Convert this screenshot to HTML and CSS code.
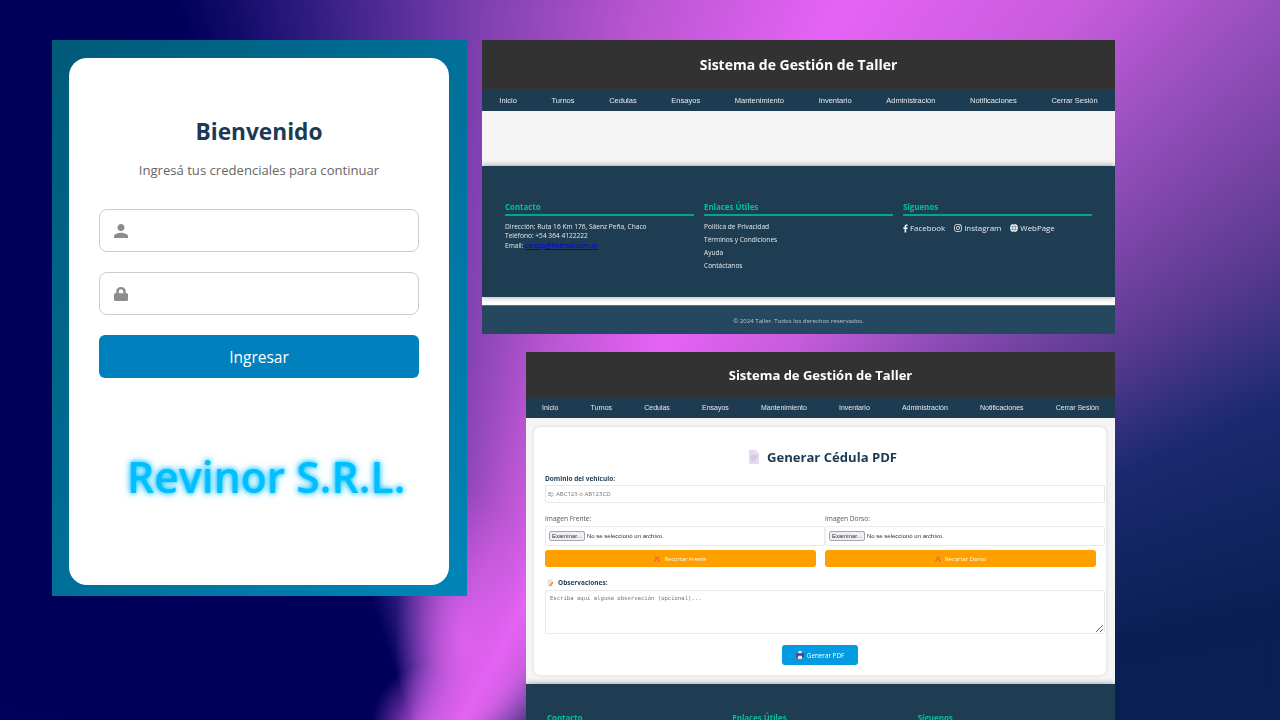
FILE: index.html
```html
<!DOCTYPE html>
<html lang="es">
<head>
  <meta charset="utf-8">
  <title>Revinor S.R.L.</title>
  <link rel="stylesheet" href="styles.css">
</head>
<body>
  <div class="window loginShot">
    <div class="loginCard">
      <h1 class="loginTitle">Bienvenido</h1>
      <p class="loginSub">Ingresá tus credenciales para continuar</p>
      <div class="loginField">
        <svg class="fieldIcon" viewBox="4 4 16 16"><path d="M12 12c2.21 0 4-1.79 4-4s-1.79-4-4-4-4 1.79-4 4 1.79 4 4 4zm0 2c-2.67 0-8 1.34-8 4v2h16v-2c0-2.66-5.33-4-8-4z"/></svg>
      </div>
      <div class="loginField second">
        <svg class="fieldIcon" viewBox="0 0 448 512" preserveAspectRatio="none"><path d="M400 224h-24v-72C376 68.2 307.8 0 224 0S72 68.2 72 152v72H48c-26.5 0-48 21.500-48 48v192c0 26.500 21.500 48 48 48h352c26.500 0 48-21.500 48-48V272c0-26.500-21.500-48-48-48zm-104 0H152v-72c0-39.700 32.300-72 72-72s72 32.300 72 72v72z"/></svg>
      </div>
      <button class="loginButton">Ingresar</button>
      <div class="brand">Revinor S.R.L.</div>
    </div>
  </div>

  <div class="window homeShot">
    <div class="topBar">Sistema de Gestión de Taller</div>
    <nav class="navBar">
      <span>Inicio</span><span>Turnos</span><span>Cedulas</span><span>Ensayos</span><span>Mantenimiento</span><span>Inventario</span><span>Administración</span><span>Notificaciones</span><span>Cerrar Sesión</span>
    </nav>
    <div class="emptyMain"></div>
    <footer class="siteFooter">
      <div class="footerCol">
        <h4>Contacto</h4>
        <p class="contactText">Dirección: Ruta 16 Km 176, Sáenz Peña, Chaco<br>Teléfono: +54 364 4122222<br>Email: <a href="#">centsp@hotmail.com.ar</a></p>
      </div>
      <div class="footerCol">
        <h4>Enlaces Útiles</h4>
        <p class="footerLink first">Política de Privacidad</p>
        <p class="footerLink">Términos y Condiciones</p>
        <p class="footerLink">Ayuda</p>
        <p class="footerLink">Contáctanos</p>
      </div>
      <div class="footerCol">
        <h4>Síguenos</h4>
        <div class="socialRow">
          <span class="socialItem"><svg class="socialIcon fb" viewBox="0 0 320 512"><path d="M279 288l14-93h-89v-60c0-25 12-50 52-50h41V6s-37-6-72-6c-73 0-121 44-121 125v70H23v93h81v224h100V288z"/></svg>Facebook</span>
          <span class="socialItem"><svg class="socialIcon" viewBox="0 0 16 16" fill="none" stroke="#fff" stroke-width="1.500"><rect x="1" y="1" width="14" height="14" rx="4"/><circle cx="8" cy="8" r="3.200"/><circle cx="12" cy="4" r=".5"/></svg>Instagram</span>
          <span class="socialItem"><svg class="socialIcon" viewBox="0 0 16 16"><circle cx="8" cy="8" r="8" fill="#fff"/><path d="M0 5.500h16M0 10.500h16M8 0c-4 4-4 12 0 16M8 0c4 4 4 12 0 16" fill="none" stroke="#1e3d52" stroke-width=".9"/></svg>WebPage</span>
        </div>
      </div>
    </footer>
    <div class="whiteStrip"></div>
    <div class="copyBar">© 2024 Taller. Todos los derechos reservados.</div>
  </div>

  <div class="window formShot">
    <div class="topBar">Sistema de Gestión de Taller</div>
    <nav class="navBar">
      <span>Inicio</span><span>Turnos</span><span>Cedulas</span><span>Ensayos</span><span>Mantenimiento</span><span>Inventario</span><span>Administración</span><span>Notificaciones</span><span>Cerrar Sesión</span>
    </nav>
    <div class="formMain">
      <div class="formCard">
        <h2 class="formTitle">
          <svg class="docIcon" viewBox="0 0 12 14"><path d="M1 0h7l3 3v11H1z" fill="#e6d8ee"/><path d="M8 0l3 3H8z" fill="#f3ecf7"/><path d="M3 6h6M3 8h6M3 10h4" stroke="#c9b6d6" stroke-width="1"/></svg>
          Generar Cédula PDF
        </h2>
        <label class="strongLabel">Dominio del vehículo:</label>
        <input class="textBox" type="text" placeholder="Ej: ABC123 o AB123CD">
        <div class="twoCols">
          <div class="imageCol">
            <label class="plainLabel">Imagen Frente:</label>
            <div class="fileBox"><span class="fileButton">Examinar...</span><span>No se seleccionó un archivo.</span></div>
            <button class="cropButton"><svg class="tinyIcon" viewBox="0 0 10 10"><path d="M1 1l8 6M9 1L1 7" stroke="#e8505a" stroke-width="1.400"/><circle cx="2" cy="8" r="1.300" fill="#e8505a"/><circle cx="8" cy="8" r="1.300" fill="#e8505a"/></svg>Recortar Frente</button>
          </div>
          <div class="imageCol">
            <label class="plainLabel">Imagen Dorso:</label>
            <div class="fileBox"><span class="fileButton">Examinar...</span><span>No se seleccionó un archivo.</span></div>
            <button class="cropButton"><svg class="tinyIcon" viewBox="0 0 10 10"><path d="M1 1l8 6M9 1L1 7" stroke="#e8505a" stroke-width="1.400"/><circle cx="2" cy="8" r="1.300" fill="#e8505a"/><circle cx="8" cy="8" r="1.300" fill="#e8505a"/></svg>Recortar Dorso</button>
          </div>
        </div>
        <label class="strongLabel notes"><svg class="memoIcon" viewBox="0 0 10 10"><path d="M1 0h6v10H1z" fill="#eadfe6"/><path d="M4 8l4-5 1.500 1.200-4 5L4 10z" fill="#f08a3c"/></svg>Observaciones:</label>
        <textarea class="notesBox" placeholder="Escriba aquí alguna observación (opcional)..."></textarea>
        <div class="submitRow">
          <button class="submitButton"><svg class="printerIcon" viewBox="0 0 10 10"><path d="M3 0h4v3H3z" fill="#e8e4f0"/><path d="M0 3h10v5H0z" fill="#5b3f8c"/><path d="M2.500 6h5v4h-5z" fill="#e8e4f0"/></svg>Generar PDF</button>
        </div>
      </div>
    </div>
    <footer class="siteFooter clipped">
      <div class="footerCol"><h4>Contacto</h4></div>
      <div class="footerCol"><h4>Enlaces Útiles</h4></div>
      <div class="footerCol"><h4>Síguenos</h4></div>
    </footer>
  </div>
</body>
</html>
```
FILE: styles.css
```css
html, body {
  height: 100%;
}

body {
  margin: 0;
  overflow: hidden;
  font-family: "Open Sans", "Noto Sans", sans-serif;
  background:
    radial-gradient(ellipse 55px 70px at 425px 735px, rgba(230, 100, 245, 0.9), rgba(230, 100, 245, 0)),
    radial-gradient(ellipse 70px 150px at 465px 640px, rgba(225, 98, 240, 0.9), rgba(225, 98, 240, 0)),
    conic-gradient(from -40deg at 430px 780px,
      #00005a 0deg,
      #00005a 22deg,
      #3a2288 33deg,
      #7f40b0 44deg,
      #b855d0 55deg,
      #e563f5 68deg,
      #c85cdc 80deg,
      #9a50c0 87deg,
      #5a3a90 98deg,
      #1a2a6f 106deg,
      #0a2055 118deg,
      #0b1d50 220deg,
      #00005a 320deg);
}

.window {
  position: absolute;
  overflow: hidden;
}

/* login */
.loginShot {
  left: 52px;
  top: 40px;
  width: 415px;
  height: 556px;
  box-sizing: border-box;
  padding: 18px 18px 11px 17px;
  background: linear-gradient(to bottom right, #005a78, #0085b8);
}

.loginCard {
  box-sizing: border-box;
  height: 527px;
  padding: 58px 30px 0;
  background-color: #fff;
  border-radius: 18px;
}

.loginTitle {
  margin: 0;
  font-size: 22.700px;
  line-height: 32px;
  font-weight: 700;
  text-align: center;
  color: #1b3a54;
}

.loginSub {
  margin: 12px 0 0;
  font-size: 13.100px;
  line-height: 20px;
  text-align: center;
  color: #666;
}

.loginField {
  box-sizing: border-box;
  display: flex;
  align-items: center;
  height: 43px;
  margin-top: 29px;
  padding-left: 14px;
  border: 1px solid #ccc;
  border-radius: 8px;
}

.loginField.second {
  margin-top: 20px;
}

.fieldIcon {
  width: 14px;
  height: 14px;
  fill: #8c8c8c;
}

.loginButton {
  display: block;
  width: 100%;
  height: 43px;
  margin-top: 20px;
  border: 0;
  border-radius: 6px;
  background-color: #0080bd;
  color: #fff;
  font-family: "Open Sans", sans-serif;
  font-size: 15.500px;
}

.brand {
  margin-top: 69px;
  padding-left: 14px;
  font-size: 42.700px;
  line-height: 60px;
  font-weight: 600;
  text-align: center;
  white-space: nowrap;
  color: #00bfff;
  text-shadow: 0 0 5px #00bfff, 0 0 8px rgba(0, 191, 255, 0.6);
}

/* shared app parts */
.homeShot,
.formShot {
  filter: blur(0.3px);
}

.topBar {
  background-color: #323232;
  color: #fff;
  font-weight: 700;
  text-align: center;
}

.navBar {
  display: flex;
  justify-content: space-around;
  align-items: center;
  background-color: #1d3c52;
  color: #e6eaee;
  font-family: "Liberation Sans", Arial, sans-serif;
}

.homeShot {
  left: 482px;
  top: 40px;
  width: 633px;
  height: 294px;
  background-color: #fff;
}

.homeShot .topBar {
  height: 49px;
  font-size: 14px;
  line-height: 50px;
}

.homeShot .navBar {
  height: 22px;
  font-size: 7.500px;
}

.emptyMain {
  height: 55px;
  background-color: #f5f5f5;
}

.siteFooter {
  position: relative;
  display: flex;
  box-sizing: border-box;
  height: 131px;
  padding: 35px 23px 0;
  gap: 10px;
  background-color: #1e3d52;
  box-shadow: 0 0 6px rgba(0, 0, 0, 0.4);
  color: #e6eaee;
}

.footerCol {
  flex: 1;
  font-size: 6.600px;
}

.footerCol h4 {
  margin: 0;
  padding-bottom: 1px;
  border-bottom: 2px solid #00a88a;
  font-size: 7.900px;
  line-height: 12px;
  font-weight: 700;
  color: #00c09a;
}

.contactText {
  margin: 6px 0 0;
  line-height: 9.400px;
}

.contactText a {
  color: #0000ee;
}

.footerLink {
  margin: 3.500px 0 0;
  line-height: 9.500px;
}

.footerLink.first {
  margin-top: 6px;
}

.socialRow {
  display: flex;
  gap: 9px;
  margin-top: 6px;
  font-size: 7.900px;
  line-height: 12px;
}

.socialItem {
  display: flex;
  align-items: center;
  gap: 2px;
}

.socialIcon {
  width: 8px;
  height: 8px;
}

.socialIcon.fb {
  width: 5px;
  height: 9px;
  fill: #fff;
}

.whiteStrip {
  height: 9px;
  background-color: #fff;
  border-bottom: 1px solid #12907f;
  box-sizing: border-box;
}

.copyBar {
  height: 28px;
  background-color: #25475f;
  color: #b9c4cc;
  font-size: 6.100px;
  line-height: 29px;
  text-align: center;
}

/* form page */
.formShot {
  left: 526px;
  top: 352px;
  width: 589px;
  height: 368px;
  background-color: #f5f5f5;
}

.formShot .topBar {
  height: 45px;
  font-size: 13px;
  line-height: 47px;
}

.formShot .navBar {
  height: 21px;
  font-size: 7px;
}

.formMain {
  box-sizing: border-box;
  height: 266px;
  padding: 9px 9px 0 8px;
}

.formCard {
  box-sizing: border-box;
  height: 248px;
  padding: 20px 1px 10px 11px;
  background-color: #fff;
  border-radius: 6px;
  box-shadow: 0 0 4px rgba(0, 0, 0, 0.12);
}

.formTitle {
  display: flex;
  justify-content: center;
  align-items: center;
  gap: 7px;
  margin: 0;
  padding-right: 5px;
  font-size: 13.100px;
  line-height: 20px;
  font-weight: 700;
  color: #1b3a54;
}

.docIcon {
  width: 12px;
  height: 14px;
}

.strongLabel {
  display: block;
  margin-top: 7px;
  font-size: 6.500px;
  line-height: 10px;
  font-weight: 700;
  color: #1b3a54;
}

.strongLabel.notes {
  display: flex;
  align-items: center;
  gap: 4px;
  margin-top: 11px;
  padding-left: 2px;
}

.memoIcon {
  width: 7px;
  height: 8px;
}

.plainLabel {
  display: block;
  font-size: 6.600px;
  line-height: 10px;
  color: #555;
}

.textBox {
  display: block;
  box-sizing: border-box;
  width: 100%;
  height: 18px;
  margin: 1px 0 0;
  padding: 0 2px;
  border: 1px solid #e8e8e8;
  border-radius: 2px;
  font-family: "Open Sans", sans-serif;
  font-size: 6px;
}

.twoCols {
  display: grid;
  grid-template-columns: 280px 280px;
  margin-top: 11px;
}

.fileBox {
  display: flex;
  align-items: center;
  box-sizing: border-box;
  height: 20px;
  margin-top: 2px;
  padding-left: 3px;
  gap: 2px;
  border: 1px solid #ececec;
  border-radius: 2px;
  font-family: "Liberation Sans", Arial, sans-serif;
  font-size: 6px;
  color: #333;
}

.fileButton {
  padding: 1px 2px;
  background-color: #efeff4;
  border: 1px solid #a5a5b0;
  border-radius: 2px;
}

.cropButton {
  display: flex;
  justify-content: center;
  align-items: center;
  gap: 4px;
  width: 271px;
  height: 17px;
  margin-top: 4px;
  padding: 0;
  border: 0;
  border-radius: 3px;
  background-color: #ff9f00;
  color: #fff;
  font-family: "Open Sans", sans-serif;
  font-size: 5.800px;
}

.tinyIcon {
  width: 6px;
  height: 6px;
}

.printerIcon {
  width: 8px;
  height: 8px;
}

.notesBox {
  display: block;
  box-sizing: border-box;
  width: 100%;
  height: 44px;
  margin: 2px 0 0;
  padding: 4px;
  border: 1px solid #e8e8e8;
  border-radius: 2px;
  font-family: "DejaVu Sans Mono", "Liberation Mono", monospace;
  font-size: 5.600px;
}

.submitRow {
  display: flex;
  justify-content: center;
  margin-top: 11px;
  padding-right: 10px;
}

.submitButton {
  display: flex;
  justify-content: center;
  align-items: center;
  gap: 3px;
  width: 76px;
  height: 20px;
  padding: 0;
  border: 0;
  border-radius: 3px;
  background-color: #049be0;
  color: #fff;
  font-family: "Open Sans", sans-serif;
  font-size: 6.300px;
}

.siteFooter.clipped {
  gap: 9px;
  padding: 28px 21px 0;
}

.siteFooter.clipped .footerCol h4 {
  border: 0;
}
```
